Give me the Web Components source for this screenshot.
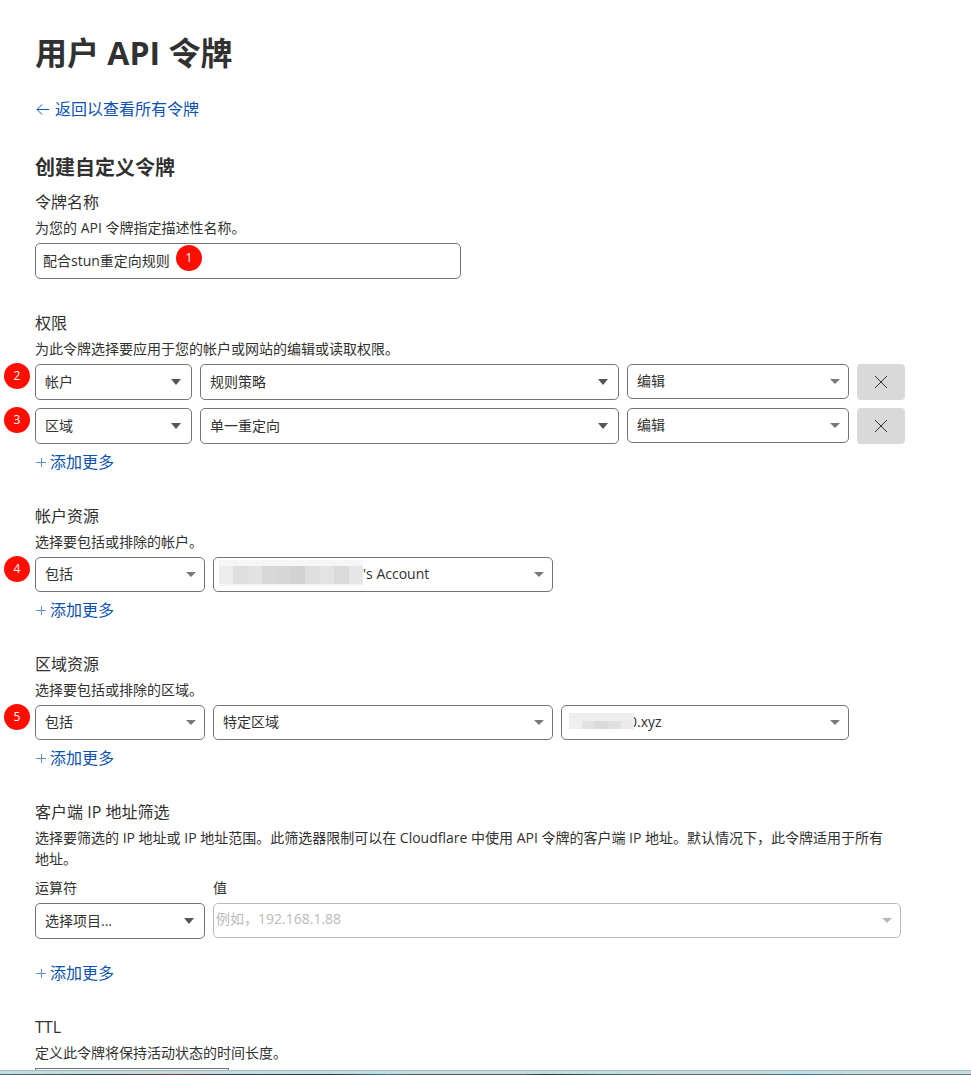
<!DOCTYPE html>
<html lang="zh-CN">
<head>
  <meta charset="utf-8">
  <meta name="viewport" content="width=device-width, initial-scale=1">
  <title>用户 API 令牌</title>
  <style>
    body {
      margin: 0;
      background: #fff;
      color: #313131;
      font-family: "Open Sans", "Noto Sans CJK SC", sans-serif;
      font-size: 14px;
      line-height: 21px;
    }
  </style>
</head>
<body>
  <token-page></token-page>

  <script>
    class StepBadge extends HTMLElement {
      constructor() {
        super();
        this.attachShadow({ mode: "open" }).innerHTML = `
          <style>
            :host {
              position: absolute;
              left: -31px;
              top: -1px;
              width: 26px;
              height: 26px;
              border-radius: 50%;
              background: #ff0e00;
              color: #fff;
              font-size: 12px;
              line-height: 26px;
              text-align: center;
            }
          </style>
          <slot></slot>
        `;
      }
    }

    class SelectBox extends HTMLElement {
      connectedCallback() {
        const label = this.getAttribute("label");
        const value = this.getAttribute("value");
        this.attachShadow({ mode: "open" }).innerHTML = `
          <style>
            :host {
              display: grid;
              position: relative;
              align-self: start;
              min-width: 0;
            }
            select {
              grid-area: 1 / 1;
              appearance: none;
              box-sizing: border-box;
              width: 100%;
              height: 35px;
              margin: 0;
              padding: 0 28px 2px 9px;
              border: 1px solid #747474;
              border-radius: 5px;
              background: #fff;
              color: #313131;
              font: inherit;
            }
            svg {
              grid-area: 1 / 1;
              place-self: center end;
              margin-right: 9px;
              width: 10px;
              height: 5px;
              fill: #797979;
              pointer-events: none;
            }
            :host([native]) select {
              height: 36px;
            }
            :host([native]) svg {
              margin-right: 11px;
              height: 6px;
              fill: #555;
            }
            :host([masked]) select {
              padding-left: var(--mask-inset);
            }
          </style>
          <select aria-label="${label}"><option>${value}</option></select>
          <svg viewBox="0 0 10 5" preserveAspectRatio="none"><path d="M0 0h10L5 5z"/></svg>
          <slot></slot>
        `;
      }
    }

    // Greyed-out blocks drawn over a private name
    class PrivacyMask extends HTMLElement {
      connectedCallback() {
        const cells = this.getAttribute("cells").split(" ");
        this.attachShadow({ mode: "open" }).innerHTML = `
          <style>
            :host {
              position: absolute;
              top: var(--mask-top);
              left: var(--mask-left);
              width: var(--mask-width);
              background: var(--mask-tint);
            }
            .cells {
              display: flex;
              height: var(--mask-cell);
              padding: var(--mask-padding);
            }
            .cells i {
              flex: 1;
            }
          </style>
          <div class="cells">${cells.map(c => `<i style="background:#${c}"></i>`).join("")}</div>
        `;
      }
    }

    class AddLink extends HTMLElement {
      constructor() {
        super();
        this.attachShadow({ mode: "open" }).innerHTML = `
          <style>
            :host {
              display: block;
              margin-top: 8px;
              font-size: 16px;
              line-height: 20px;
            }
            a {
              display: inline-flex;
              align-items: center;
              gap: 3px;
              color: #0a52b0;
              text-decoration: none;
            }
            svg {
              width: 12px;
              height: 12px;
              stroke: #5b8ed0;
            }
          </style>
          <a href="#"><svg viewBox="0 0 12 12"><path d="M1 6.5h10M6.5 2v9"/></svg><slot></slot></a>
        `;
      }
    }

    class RemoveButton extends HTMLElement {
      constructor() {
        super();
        this.attachShadow({ mode: "open" }).innerHTML = `
          <style>
            :host {
              display: block;
            }
            button {
              display: grid;
              place-items: center;
              width: 100%;
              height: 36px;
              padding: 0;
              border: 0;
              border-radius: 4px;
              background: #d9d9d9;
            }
            svg {
              width: 14px;
              height: 14px;
              stroke: #313131;
            }
          </style>
          <button type="button" aria-label="删除">
            <svg viewBox="0 0 14 14"><path d="M1 1l12 12M13 1L1 13"/></svg>
          </button>
        `;
      }
    }

    class FormSection extends HTMLElement {
      connectedCallback() {
        this.attachShadow({ mode: "open" }).innerHTML = `
          <style>
            :host {
              display: block;
              margin-bottom: 32px;
            }
            h3 {
              margin: 0 0 3px;
              font-size: 16px;
              font-weight: 400;
              line-height: 24px;
            }
            p {
              max-width: 860px;
              margin: 0 0 5px;
            }
          </style>
          <h3>${this.getAttribute("heading")}</h3>
          <p>${this.getAttribute("hint")}</p>
          <slot></slot>
        `;
      }
    }

    class TokenPage extends HTMLElement {
      constructor() {
        super();
        this.attachShadow({ mode: "open" }).innerHTML = `
          <style>
            :host {
              display: flex;
              flex-direction: column;
              height: 100vh;
            }
            main {
              flex: 1;
              min-height: 0;
              overflow: hidden;
              padding: 29px 66px 0 35px;
            }
            h1 {
              margin: 0 0 20px;
              font-size: 32px;
              line-height: 48px;
            }
            h2 {
              margin: 0 0 7px;
              font-size: 20px;
              line-height: 30px;
            }
            .back {
              display: flex;
              align-items: center;
              gap: 5px;
              width: fit-content;
              margin-bottom: 32px;
              color: #0a52b0;
              font-size: 16px;
              line-height: 24px;
              text-decoration: none;
            }
            .back svg {
              width: 15px;
              height: 12px;
              fill: none;
              stroke: #0a52b0;
            }
            .row {
              display: grid;
              position: relative;
              gap: 8px;
            }
            .row + .row {
              margin-top: 8px;
            }
            .name {
              grid-template-columns: minmax(0, 426px);
            }
            .name step-badge {
              left: 141px;
              top: 2px;
            }
            .permission {
              grid-template-columns: 157px minmax(0, 1fr) 222px 48px;
            }
            .resource {
              grid-template-columns: 170px minmax(0, 340px) minmax(0, 288px);
            }
            .filter {
              grid-template-columns: 170px minmax(0, 1fr);
              gap: 5px 8px;
              margin: 8px 4px 24px 0;
            }
            .ttl {
              grid-template-columns: 194px;
            }
            input {
              box-sizing: border-box;
              width: 100%;
              height: 36px;
              margin: 0;
              padding: 0 8px 2px 7px;
              border: 1px solid #747474;
              border-radius: 5px;
              background: #fff;
              color: #313131;
              font: inherit;
            }
            .ttl input {
              border-radius: 0;
            }
            .combo {
              display: grid;
              align-self: start;
            }
            .combo input {
              grid-area: 1 / 1;
              height: 35px;
              padding: 0 28px 4px 2px;
              border-color: #b9b9b9;
            }
            .combo input::placeholder {
              color: #b9b9b9;
              opacity: 1;
            }
            .combo svg {
              grid-area: 1 / 1;
              place-self: center end;
              margin-right: 9px;
              width: 10px;
              height: 5px;
              fill: #b9b9b9;
            }
            .account {
              --mask-inset: 149px;
              --mask-top: 3px;
              --mask-left: 6px;
              --mask-width: 144px;
              --mask-tint: #f6f6f6;
              --mask-cell: 18px;
              --mask-padding: 6px 0 2px;
            }
            .zone {
              --mask-inset: 67px;
              --mask-top: 8px;
              --mask-left: 8px;
              --mask-width: 65px;
              --mask-tint: #eee;
              --mask-cell: 8px;
              --mask-padding: 8px 0 0;
            }
            footer {
              height: 4px;
              border-top: 1px solid #a3b9bd;
              background: #c3dde1;
            }
            footer::after {
              content: "";
              display: flow-root;
              height: 1px;
              background: linear-gradient(90deg, #4b6b70, #3b4045 10%, #8a3035 18%, #333a5a 24%, #2b3338 34%, #3478a0 40%, #555 42%, #555 54%, #2b3338 56%, #2b6650 62%, #666 68%, #666 78%, #2380a5 82%, #777 88%, #777);
            }
            footer {
              display: flex;
              flex-direction: column;
              justify-content: flex-end;
            }
          </style>
          <main>
            <h1>用户 API 令牌</h1>
            <a class="back" href="#">
              <svg viewBox="0 0 15 12"><path d="M14 6.5H2M7 1.5L2 6.5l5 5"/></svg>返回以查看所有令牌
            </a>
            <h2>创建自定义令牌</h2>

            <form-section heading="令牌名称" hint="为您的 API 令牌指定描述性名称。">
              <div class="row name">
                <input type="text" aria-label="令牌名称" value="配合stun重定向规则">
                <step-badge>1</step-badge>
              </div>
            </form-section>

            <form-section heading="权限" hint="为此令牌选择要应用于您的帐户或网站的编辑或读取权限。">
              <div class="row permission">
                <select-box native label="类型" value="帐户"></select-box>
                <select-box native label="项目" value="规则策略"></select-box>
                <select-box label="权限" value="编辑"></select-box>
                <remove-button></remove-button>
                <step-badge>2</step-badge>
              </div>
              <div class="row permission">
                <select-box native label="类型" value="区域"></select-box>
                <select-box native label="项目" value="单一重定向"></select-box>
                <select-box label="权限" value="编辑"></select-box>
                <remove-button></remove-button>
                <step-badge>3</step-badge>
              </div>
              <add-link>添加更多</add-link>
            </form-section>

            <form-section heading="帐户资源" hint="选择要包括或排除的帐户。">
              <div class="row resource">
                <select-box label="包括或排除" value="包括"></select-box>
                <select-box class="account" masked label="帐户" value="'s Account">
                  <privacy-mask cells="ececec dedede e2e2e2 d8d8d8 d6d6d6 d2d2d2 dfdfdf e3e3e3 dadada e6e6e6"></privacy-mask>
                </select-box>
                <step-badge>4</step-badge>
              </div>
              <add-link>添加更多</add-link>
            </form-section>

            <form-section heading="区域资源" hint="选择要包括或排除的区域。">
              <div class="row resource">
                <select-box label="包括或排除" value="包括"></select-box>
                <select-box label="区域范围" value="特定区域"></select-box>
                <select-box class="zone" masked label="区域" value="0.xyz">
                  <privacy-mask cells="efefef e2e2e2 dadada e0e0e0 ebebeb"></privacy-mask>
                </select-box>
                <step-badge>5</step-badge>
              </div>
              <add-link>添加更多</add-link>
            </form-section>

            <form-section heading="客户端 IP 地址筛选" hint="选择要筛选的 IP 地址或 IP 地址范围。此筛选器限制可以在 Cloudflare 中使用 API 令牌的客户端 IP 地址。默认情况下，此令牌适用于所有地址。">
              <div class="row filter">
                <span>运算符</span>
                <label for="ip">值</label>
                <select-box native label="运算符" value="选择项目..."></select-box>
                <div class="combo">
                  <input id="ip" type="text" placeholder="例如，192.168.1.88">
                  <svg viewBox="0 0 10 5"><path d="M0 0h10L5 5z"/></svg>
                </div>
              </div>
              <add-link>添加更多</add-link>
            </form-section>

            <form-section heading="TTL" hint="定义此令牌将保持活动状态的时间长度。">
              <div class="row ttl">
                <input type="text" aria-label="开始日期">
              </div>
            </form-section>
          </main>
          <footer></footer>
        `;
      }
    }

    customElements.define("step-badge", StepBadge);
    customElements.define("select-box", SelectBox);
    customElements.define("privacy-mask", PrivacyMask);
    customElements.define("add-link", AddLink);
    customElements.define("remove-button", RemoveButton);
    customElements.define("form-section", FormSection);
    customElements.define("token-page", TokenPage);
  </script>
</body>
</html>
